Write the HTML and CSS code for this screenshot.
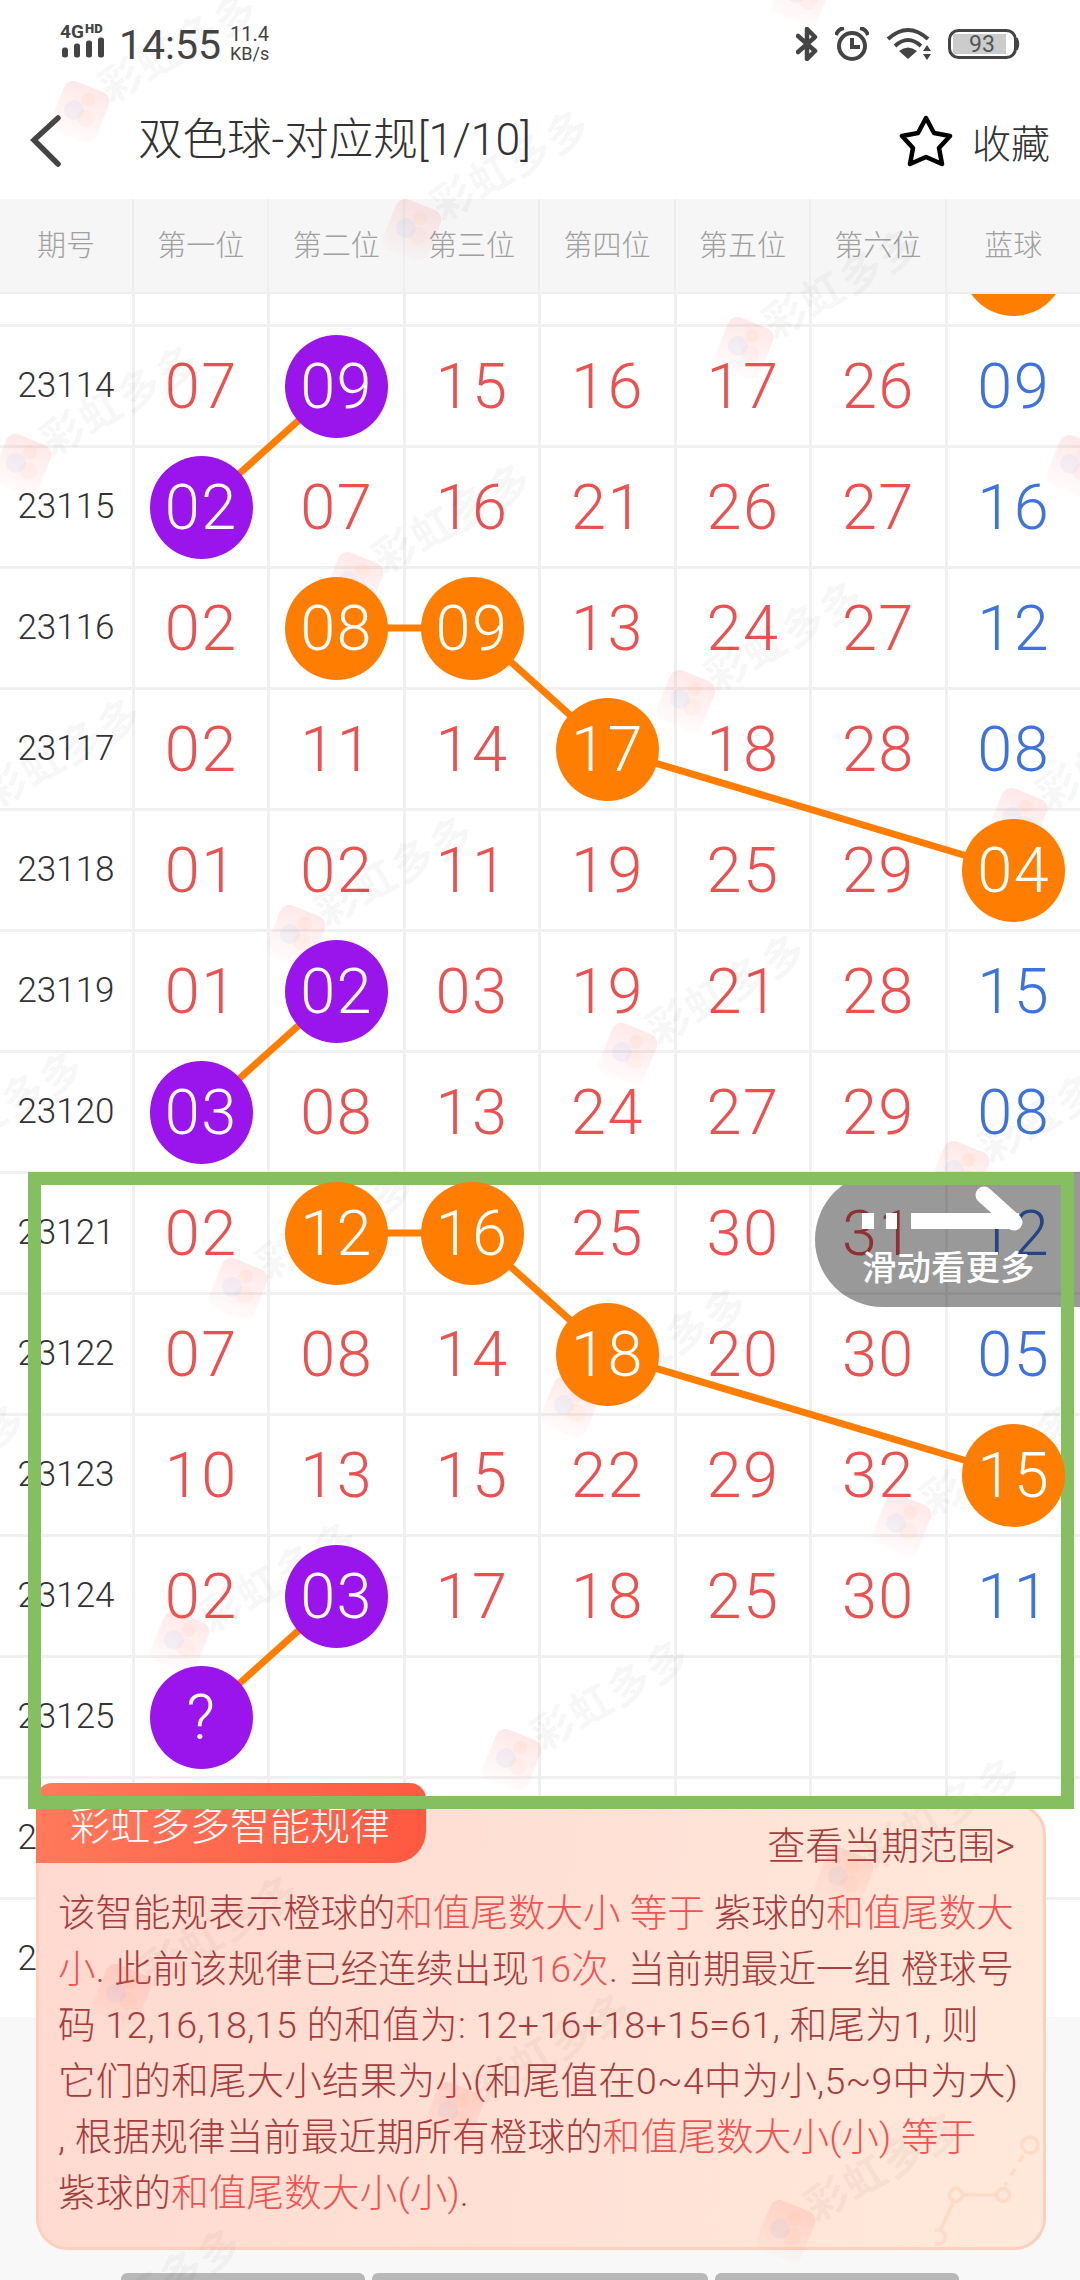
FILE: index.html
```html
<!DOCTYPE html>
<html lang="en">
<head>
    <meta charset="UTF-8">
    <meta name="viewport" content="width=device-width, initial-scale=1.0">
    <title>双色球-对应规</title>
    <link rel="stylesheet" href="styles.css">
</head>
<body>
    <!-- Status bar -->
    <div class="status-bar">
        <svg class="signal" width="46" height="50" viewBox="0 -10 46 50">
            <text class="signal-4g" x="0" y="8.5">4G</text>
            <text class="signal-hd" x="25" y="3.5">HD</text>
            <rect x="2" y="18.5" width="6" height="10" rx="2.5"/>
            <rect x="14" y="14.5" width="6" height="14" rx="2.5"/>
            <rect x="26" y="11.5" width="6" height="17" rx="2.5"/>
            <rect x="38" y="8.5" width="6" height="20" rx="2.5"/>
        </svg>
        <span class="clock">14:55</span>
        <div class="speed"><span>11.4</span><span class="speed-unit">KB/s</span></div>
        <div class="status-icons">
            <svg width="22" height="34" viewBox="0 0 22 34" fill="none" stroke="#444" stroke-width="4.5" stroke-linecap="round" stroke-linejoin="round">
                <polyline points="2,9 19,24 11,32 11,2 19,10 2,25"/>
            </svg>
            <svg width="34" height="34" viewBox="0 0 34 34" fill="none" stroke="#444" stroke-width="4">
                <circle cx="17" cy="19" r="13"/>
                <polyline points="17,11 17,20 25,20"/>
                <path d="M1 8 Q3 2 9 1"/>
                <path d="M33 8 Q31 2 25 1"/>
            </svg>
            <svg width="45" height="33" viewBox="0 0 45 33" fill="none" stroke="#444" stroke-width="4">
                <path d="M2 12 Q22 -6 42 12"/>
                <path d="M9 19 Q22 7 35 19"/>
                <path d="M22 32 L13 24 Q22 17 31 24 Z" fill="#444" stroke="none"/>
                <path d="M41 18 L45 24 L37 24 Z" fill="#444" stroke="none"/>
                <path d="M41 33 L45 27 L37 27 Z" fill="#444" stroke="none"/>
            </svg>
            <svg width="72" height="30" viewBox="0 0 72 30">
                <rect x="1.5" y="1.5" width="66" height="27" rx="9" fill="none" stroke="#444" stroke-width="3"/>
                <rect x="5" y="5" width="53" height="20" fill="#ccc"/>
                <path d="M69 9 Q72 15 69 21 Z" fill="#444" stroke="#444" stroke-width="1.5"/>
                <text class="battery-num" x="34" y="23">93</text>
            </svg>
        </div>
    </div>

    <!-- Title bar -->
    <div class="nav-bar">
        <svg class="back" width="32" height="52" viewBox="0 0 32 52" fill="none" stroke="#444" stroke-width="5.5" stroke-linecap="round">
            <polyline points="28,3 4,25 28,49"/>
        </svg>
        <span class="nav-title">双色球-对应规[1/10]</span>
        <svg class="star" width="54" height="52" viewBox="0 0 54 52" fill="none" stroke="#000" stroke-width="4.5" stroke-linejoin="round">
            <polygon points="27,3 35,18 51,21 40,33 43,49 27,42 11,49 14,33 3,21 19,18"/>
        </svg>
        <span class="nav-fav">收藏</span>
    </div>

    <!-- Column heads -->
    <div class="grid head-row">
        <div class="head-cell">期号</div>
        <div class="head-cell">第一位</div>
        <div class="head-cell">第二位</div>
        <div class="head-cell">第三位</div>
        <div class="head-cell">第四位</div>
        <div class="head-cell">第五位</div>
        <div class="head-cell">第六位</div>
        <div class="head-cell">蓝球</div>
    </div>

    <!-- Number table -->
    <div class="table-body">
        <svg class="links" width="1080" height="1723" viewBox="0 294 1080 1723" fill="none" stroke="#ff7d00" stroke-width="7">
            <line x1="337" y1="386" x2="202" y2="507"/>
            <polyline points="337,628 473,628 608,749 1014,870"/>
            <line x1="337" y1="991" x2="202" y2="1112"/>
            <polyline points="337,1233 473,1233 608,1354 1014,1475"/>
            <line x1="337" y1="1596" x2="202" y2="1717"/>
        </svg>

        <div class="grid row row-cut">
            <div class="cell"></div><div class="cell"></div><div class="cell"></div><div class="cell"></div>
            <div class="cell"></div><div class="cell"></div><div class="cell"></div>
            <div class="cell"><span class="ball orange"></span></div>
        </div>

        <div class="grid row">
            <div class="cell period">23114</div>
            <div class="cell">07</div><div class="cell"><span class="ball purple">09</span></div><div class="cell">15</div><div class="cell">16</div>
            <div class="cell">17</div><div class="cell">26</div><div class="cell blue">09</div>
        </div>
        <div class="grid row">
            <div class="cell period">23115</div>
            <div class="cell"><span class="ball purple">02</span></div><div class="cell">07</div><div class="cell">16</div><div class="cell">21</div>
            <div class="cell">26</div><div class="cell">27</div><div class="cell blue">16</div>
        </div>
        <div class="grid row">
            <div class="cell period">23116</div>
            <div class="cell">02</div><div class="cell"><span class="ball orange">08</span></div><div class="cell"><span class="ball orange">09</span></div><div class="cell">13</div>
            <div class="cell">24</div><div class="cell">27</div><div class="cell blue">12</div>
        </div>
        <div class="grid row">
            <div class="cell period">23117</div>
            <div class="cell">02</div><div class="cell">11</div><div class="cell">14</div><div class="cell"><span class="ball orange">17</span></div>
            <div class="cell">18</div><div class="cell">28</div><div class="cell blue">08</div>
        </div>
        <div class="grid row">
            <div class="cell period">23118</div>
            <div class="cell">01</div><div class="cell">02</div><div class="cell">11</div><div class="cell">19</div>
            <div class="cell">25</div><div class="cell">29</div><div class="cell"><span class="ball orange">04</span></div>
        </div>
        <div class="grid row">
            <div class="cell period">23119</div>
            <div class="cell">01</div><div class="cell"><span class="ball purple">02</span></div><div class="cell">03</div><div class="cell">19</div>
            <div class="cell">21</div><div class="cell">28</div><div class="cell blue">15</div>
        </div>
        <div class="grid row">
            <div class="cell period">23120</div>
            <div class="cell"><span class="ball purple">03</span></div><div class="cell">08</div><div class="cell">13</div><div class="cell">24</div>
            <div class="cell">27</div><div class="cell">29</div><div class="cell blue">08</div>
        </div>
        <div class="grid row">
            <div class="cell period">23121</div>
            <div class="cell">02</div><div class="cell"><span class="ball orange">12</span></div><div class="cell"><span class="ball orange">16</span></div><div class="cell">25</div>
            <div class="cell">30</div><div class="cell">31</div><div class="cell blue">12</div>
        </div>
        <div class="grid row">
            <div class="cell period">23122</div>
            <div class="cell">07</div><div class="cell">08</div><div class="cell">14</div><div class="cell"><span class="ball orange">18</span></div>
            <div class="cell">20</div><div class="cell">30</div><div class="cell blue">05</div>
        </div>
        <div class="grid row">
            <div class="cell period">23123</div>
            <div class="cell">10</div><div class="cell">13</div><div class="cell">15</div><div class="cell">22</div>
            <div class="cell">29</div><div class="cell">32</div><div class="cell"><span class="ball orange">15</span></div>
        </div>
        <div class="grid row">
            <div class="cell period">23124</div>
            <div class="cell">02</div><div class="cell"><span class="ball purple">03</span></div><div class="cell">17</div><div class="cell">18</div>
            <div class="cell">25</div><div class="cell">30</div><div class="cell blue">11</div>
        </div>
        <div class="grid row">
            <div class="cell period">23125</div>
            <div class="cell"><span class="ball purple">?</span></div><div class="cell"></div><div class="cell"></div><div class="cell"></div>
            <div class="cell"></div><div class="cell"></div><div class="cell"></div>
        </div>
        <div class="grid row">
            <div class="cell period">23126</div>
            <div class="cell"></div><div class="cell"></div><div class="cell"></div><div class="cell"></div>
            <div class="cell"></div><div class="cell"></div><div class="cell"></div>
        </div>
        <div class="grid row">
            <div class="cell period">23127</div>
            <div class="cell"></div><div class="cell"></div><div class="cell"></div><div class="cell"></div>
            <div class="cell"></div><div class="cell"></div><div class="cell"></div>
        </div>
    </div>

    <!-- Bottom tabs, only their top edge shows -->
    <div class="footer">
        <div class="footer-bar bar-a"></div>
        <div class="footer-bar bar-b"></div>
        <div class="footer-bar bar-c"></div>
    </div>

    <!-- Rule card over the table -->
    <div class="rule-card">
        <div class="rule-tab">彩虹多多智能规律</div>
        <div class="rule-head">查看当期范围&gt;</div>
        <div class="rule-line line-tight">该智能规表示橙球的<span class="hl">和值尾数大小 等于</span> 紫球的<span class="hl">和值尾数大</span></div>
        <div class="rule-line"><span class="hl">小</span>. 此前该规律已经连续出现<span class="hl">16次</span>. 当前期最近一组 橙球号</div>
        <div class="rule-line line-wide">码 12,16,18,15 的和值为: 12+16+18+15=61, 和尾为1, 则</div>
        <div class="rule-line">它们的和尾大小结果为小(和尾值在0~4中为小,5~9中为大)</div>
        <div class="rule-line">, 根据规律当前最近期所有橙球的<span class="hl">和值尾数大小(小) 等于</span></div>
        <div class="rule-line">紫球的<span class="hl">和值尾数大小(小)</span>.</div>
        <svg class="rule-deco" width="110" height="112" viewBox="0 0 110 112" fill="none" stroke="#ffb48c" stroke-width="3.5">
            <circle cx="95" cy="10" r="8"/>
            <path d="M88 20 L70 50" stroke-dasharray="8 8"/>
            <circle cx="68" cy="60" r="6.5"/>
            <path d="M61 60 L28 60"/>
            <circle cx="21" cy="60" r="6.5"/>
            <path d="M18 67 L6 94"/>
            <circle cx="3" cy="102" r="7"/>
        </svg>
    </div>

    <!-- Swipe hint -->
    <div class="swipe-hint">
        <svg class="swipe-arrow" width="170" height="66" viewBox="0 0 170 66" fill="#fff">
            <rect x="0" y="41" width="12" height="16"/>
            <rect x="24" y="41" width="11" height="16"/>
            <rect x="49" y="41" width="108" height="16"/>
            <line x1="122" y1="23" x2="152" y2="50" stroke="#fff" stroke-width="17" stroke-linecap="round"/>
        </svg>
        <span class="swipe-label">滑动看更多</span>
    </div>

    <!-- Watermark layer -->
    <svg class="watermarks" width="1080" height="2280" viewBox="0 0 1080 2280">
        <defs>
            <linearGradient id="wmFade" x1="0" y1="0" x2="0" y2="1">
                <stop offset="0" stop-color="#ff5a5a" stop-opacity=".14"/>
                <stop offset="1" stop-color="#ff5a5a" stop-opacity=".02"/>
            </linearGradient>
            <g id="wm">
                <rect x="-24" y="-27" width="48" height="54" rx="10" fill="url(#wmFade)" transform="rotate(22)"/>
                <circle cx="-6" cy="-2" r="10" fill="#6aa8ff" fill-opacity=".08"/>
                <circle cx="8" cy="-12" r="7" fill="#ffa050" fill-opacity=".08"/>
                <circle cx="6" cy="6" r="9" fill="#ffa050" fill-opacity=".06"/>
                <text class="wm-text" transform="translate(30 -8) rotate(-30)">彩虹多多</text>
            </g>
        </defs>
        <use href="#wm" x="802" y="-5"/>
        <use href="#wm" x="80" y="112"/>
        <use href="#wm" x="412" y="230"/>
        <use href="#wm" x="744" y="348"/>
        <use href="#wm" x="1076" y="466"/>
        <use href="#wm" x="22" y="465"/>
        <use href="#wm" x="354" y="583"/>
        <use href="#wm" x="686" y="701"/>
        <use href="#wm" x="1018" y="819"/>
        <use href="#wm" x="-36" y="818"/>
        <use href="#wm" x="296" y="936"/>
        <use href="#wm" x="628" y="1054"/>
        <use href="#wm" x="960" y="1172"/>
        <use href="#wm" x="-94" y="1171"/>
        <use href="#wm" x="238" y="1289"/>
        <use href="#wm" x="570" y="1407"/>
        <use href="#wm" x="902" y="1525"/>
        <use href="#wm" x="-152" y="1524"/>
        <use href="#wm" x="180" y="1642"/>
        <use href="#wm" x="512" y="1760"/>
        <use href="#wm" x="844" y="1878"/>
        <use href="#wm" x="122" y="1995"/>
        <use href="#wm" x="454" y="2113"/>
        <use href="#wm" x="786" y="2231"/>
        <use href="#wm" x="64" y="2348"/>
    </svg>

    <!-- Green marker box -->
    <div class="marker"></div>
</body>
</html>
```

FILE: styles.css
```css
/* Page */
body {
    margin: 0;
    width: 1080px;
    height: 2280px;
    position: relative;
    overflow: hidden;
    display: flex;
    flex-direction: column;
    background-color: #fff;
    font-family: Roboto, "Noto Sans CJK SC", sans-serif;
}

/* Status bar */
.status-bar {
    height: 87px;
    flex: none;
    display: flex;
    align-items: center;
    padding: 0 60px;
    color: #444;
}

.signal {
    fill: #444;
    margin-right: 13px;
}

.signal-4g {
    font-size: 19px;
    font-weight: 700;
}

.signal-hd {
    font-size: 13px;
    font-weight: 900;
}

.clock {
    font-size: 41px;
    width: 102px;
    margin-right: 9px;
    padding-top: 2px;
}

.speed {
    display: flex;
    flex-direction: column;
    font-size: 20px;
    line-height: 20px;
}

.speed-unit {
    font-size: 18px;
}

.status-icons {
    margin-left: auto;
    display: flex;
    align-items: center;
    gap: 17px;
}

.battery-num {
    font-size: 23px;
    fill: #555;
    text-anchor: middle;
}

/* Title bar */
.nav-bar {
    height: 112px;
    flex: none;
    display: flex;
    align-items: center;
    padding: 0 30px 4px 30px;
    box-sizing: border-box;
    color: #333;
}

.back {
    margin-right: 76px;
}

.nav-title {
    font-size: 44.5px;
    font-weight: 300;
    line-height: 50px;
    padding-bottom: 2px;
}

.star {
    margin-left: auto;
    margin-right: 19px;
}

.nav-fav {
    font-size: 39px;
    font-weight: 300;
}

/* Table */
.grid {
    display: grid;
    grid-template-columns: 132px repeat(7, 135.43px);
}

.head-row {
    height: 95px;
    flex: none;
    box-sizing: border-box;
    background-color: #f6f6f6;
    border-bottom: 2px solid #eee;
}

.head-cell {
    display: flex;
    align-items: center;
    justify-content: center;
    padding-bottom: 5px;
    font-size: 29px;
    font-weight: 300;
    color: #a0a0a0;
}

.head-cell + .head-cell {
    border-left: 2px solid #eee;
}

.table-body {
    height: 1723px;
    flex: none;
    position: relative;
    overflow: hidden;
}

.links {
    position: absolute;
    top: 0;
    left: 0;
}

.row {
    height: 121px;
    box-sizing: border-box;
    border-bottom: 3px solid #f0f0f0;
}

.row-cut {
    height: 33px;
    grid-template-rows: 30px;
}

.row-cut .cell {
    align-items: flex-end;
    padding-bottom: 8px;
    box-sizing: border-box;
}

.cell {
    display: flex;
    align-items: center;
    justify-content: center;
    font-size: 63px;
    letter-spacing: 1.5px;
    font-weight: 300;
    color: #ee4f4f;
}

.cell + .cell {
    border-left: 3px solid #f0f0f0;
}

.blue {
    color: #3c72e2;
}

.period {
    font-size: 35px;
    letter-spacing: 0;
    color: #333;
    padding-bottom: 2px;
    box-sizing: border-box;
}

.ball {
    width: 103px;
    height: 103px;
    flex: none;
    border-radius: 50%;
    display: flex;
    align-items: center;
    justify-content: center;
    color: #fff;
    position: relative;
    z-index: 2;
}

.orange {
    background-color: #ff7d00;
}

.purple {
    background-color: #9a14ec;
}

/* Footer */
.footer {
    flex: 1;
    display: flex;
    align-items: flex-end;
    gap: 7px;
    padding-left: 121px;
    background-color: #f8f8f8;
}

.footer-bar {
    height: 7px;
    background-color: #b8b8b8;
    border-radius: 6px 6px 0 0;
}

.bar-a {
    width: 244px;
}

.bar-b {
    width: 336px;
}

.bar-c {
    width: 244px;
}

/* Rule card */
.rule-card {
    position: absolute;
    left: 36px;
    top: 1803px;
    width: 1010px;
    height: 447px;
    box-sizing: border-box;
    padding: 0 0 0 19px;
    border: 3px solid #fcd0bd;
    border-radius: 32px;
    background: linear-gradient(100deg, #ffd9cf, #ffe9da);
    color: #a83c3c;
}

.rule-tab {
    position: absolute;
    left: -3px;
    top: -23px;
    width: 390px;
    height: 80px;
    box-sizing: border-box;
    padding-left: 34px;
    display: flex;
    align-items: center;
    font-size: 40px;
    font-weight: 300;
    color: #fff;
    border-radius: 16px 16px 32px 0;
    background: linear-gradient(100deg, #ff7a5c, #ff5840);
}

.rule-head {
    height: 79px;
    box-sizing: border-box;
    padding: 0 28px 6px 0;
    display: flex;
    align-items: center;
    justify-content: flex-end;
    font-size: 38px;
    font-weight: 300;
}

.rule-line {
    font-size: 37.5px;
    font-weight: 300;
    line-height: 56px;
    white-space: nowrap;
    letter-spacing: .22px;
}

.line-tight {
    letter-spacing: 0;
}

.line-wide {
    letter-spacing: .34px;
}

.hl {
    color: #ef5350;
}

.rule-deco {
    position: absolute;
    right: -2px;
    bottom: 0;
    opacity: .25;
}

/* Swipe hint */
.swipe-hint {
    position: absolute;
    left: 815px;
    top: 1172px;
    right: 0;
    height: 135px;
    box-sizing: border-box;
    padding-left: 47px;
    border-radius: 68px 0 0 68px;
    background-color: rgba(0, 0, 0, .4);
    display: flex;
    flex-direction: column;
    align-items: flex-start;
}

.swipe-arrow {
    flex: none;
}

.swipe-label {
    margin-top: 11px;
    font-size: 34.5px;
    line-height: 38px;
    font-weight: 500;
    color: #fff;
}

/* Watermarks */
.watermarks {
    position: absolute;
    top: 0;
    left: 0;
    pointer-events: none;
}

.wm-text {
    font-size: 42px;
    letter-spacing: 2px;
    font-weight: 700;
    fill: rgba(0, 0, 0, .05);
}

/* Green marker */
.marker {
    position: absolute;
    left: 28px;
    top: 1172px;
    width: 1046px;
    height: 637px;
    box-sizing: border-box;
    border: 13px solid #86bf60;
}
```
